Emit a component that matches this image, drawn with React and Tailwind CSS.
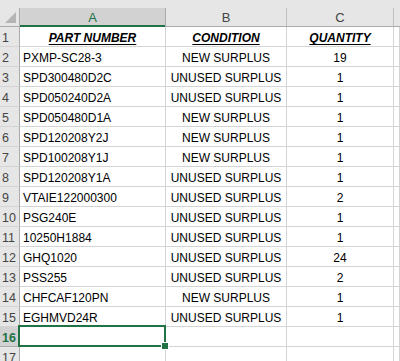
import React from "react";

const rows = [
  ["PXMP-SC28-3", "NEW SURPLUS", "19"],
  ["SPD300480D2C", "UNUSED SURPLUS", "1"],
  ["SPD050240D2A", "UNUSED SURPLUS", "1"],
  ["SPD050480D1A", "NEW SURPLUS", "1"],
  ["SPD120208Y2J", "NEW SURPLUS", "1"],
  ["SPD100208Y1J", "NEW SURPLUS", "1"],
  ["SPD120208Y1A", "UNUSED SURPLUS", "1"],
  ["VTAIE122000300", "UNUSED SURPLUS", "2"],
  ["PSG240E", "UNUSED SURPLUS", "1"],
  ["10250H1884", "UNUSED SURPLUS", "1"],
  ["GHQ1020", "UNUSED SURPLUS", "24"],
  ["PSS255", "UNUSED SURPLUS", "2"],
  ["CHFCAF120PN", "NEW SURPLUS", "1"],
  ["EGHMVD24R", "UNUSED SURPLUS", "1"],
];

const cell = "h-[20px] shrink-0 border-r border-b border-[#d4d4d4] flex items-end leading-[15px] whitespace-nowrap";

const RowHead = ({ n, active }) => (
  <div
    className={`w-[20px] h-[20px] shrink-0 border-r border-b flex items-end leading-[15px] pl-[2px] text-[12.5px] ${
      active
        ? "bg-[#d2d2d2] border-r-[#217346] border-b-[#ababab] text-[#217346] font-bold"
        : "bg-[#e6e6e6] border-r-[#ababab] border-b-[#d4d4d4] text-[#444444]"
    }`}
  >
    {n}
  </div>
);

const Row = ({ n, a, b, c, header, selected }) => {
  const hd = header ? "font-bold italic underline underline-offset-2" : "";
  return (
    <div className="flex">
      <RowHead n={n} active={selected} />
      <div className={`${cell} w-[146px] relative ${header ? "justify-center" : "pl-[3px]"} ${hd}`}>
        {a}
        {selected && (
          <div className="absolute z-10 -left-[2px] -top-[2px] w-[148px] h-[22px] border-2 border-[#217346]">
            <div className="absolute -right-[4px] -bottom-[4px] w-[6px] h-[6px] bg-[#217346] outline outline-1 outline-white" />
          </div>
        )}
      </div>
      <div className={`${cell} w-[121px] justify-center ${hd}`}>{b}</div>
      <div className={`${cell} w-[107px] justify-center ${hd}`}>{c}</div>
      <div className={`${cell} flex-1`} />
    </div>
  );
};

export default function App() {
  return (
    <div
      className="w-[400px] h-[361px] overflow-hidden bg-white text-[12px] text-black"
      style={{ fontFamily: '"Liberation Sans", Arial, sans-serif' }}
    >
      <div className="h-[8px] bg-[#e6e6e6]" />
      <div className="flex h-[19px] bg-[#e6e6e6] border-b border-[#ababab] text-[#444444] leading-[15px]">
        <div className="w-[20px] shrink-0 border-r border-[#ababab] relative">
          <svg className="absolute left-[4px] top-[3px]" width="13" height="13" viewBox="0 0 13 13">
            <polygon points="1,12 12,12 12,1" fill="#b4b4b4" />
          </svg>
        </div>
        <div className="w-[146px] shrink-0 border-r border-[#ababab] bg-[#d2d2d2] relative flex items-center justify-center text-[#217346] text-[13px]">
          A
          <div className="absolute left-0 right-0 -bottom-[1px] h-[2px] bg-[#217346]" />
        </div>
        <div className="w-[121px] shrink-0 border-r border-[#bfbfbf] flex items-center justify-center text-[13px]">B</div>
        <div className="w-[107px] shrink-0 border-r border-[#bfbfbf] flex items-center justify-center text-[13px]">C</div>
        <div className="flex-1" />
      </div>
      <Row n="1" a="PART NUMBER" b="CONDITION" c="QUANTITY" header />
      {rows.map((r, i) => (
        <Row key={i} n={String(i + 2)} a={r[0]} b={r[1]} c={r[2]} />
      ))}
      <Row n="16" a="" b="" c="" selected />
      <Row n="17" a="" b="" c="" />
    </div>
  );
}
